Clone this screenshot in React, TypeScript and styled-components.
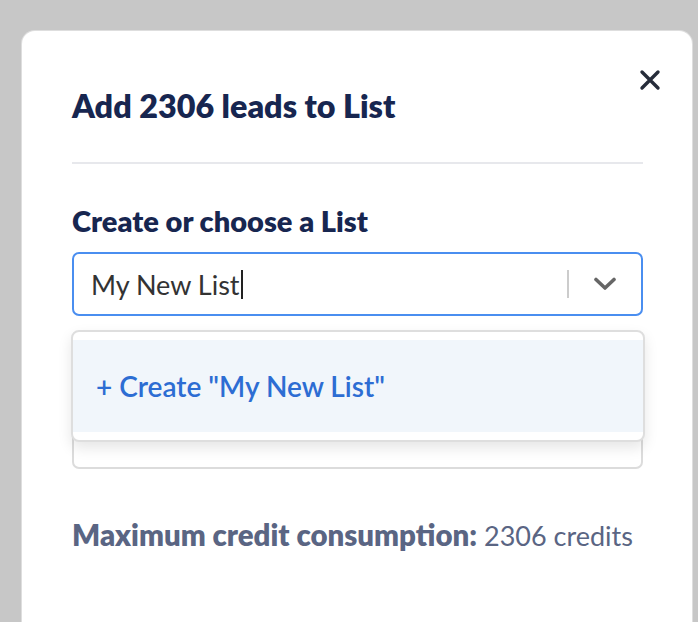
import React from "react";
import styled, { createGlobalStyle } from "styled-components";

const Global = createGlobalStyle`
  html, body { margin: 0; padding: 0; }
  body {
    background: #c7c7c7;
    font-family: "Lato", "Open Sans", sans-serif;
    overflow: hidden;
  }
`;

const Page = styled.div`
  height: 622px;
  padding: 31px 6px 0 22px;
  box-sizing: border-box;
  overflow: hidden;
`;

const Modal = styled.div`
  position: relative;
  background: #ffffff;
  border-radius: 13px;
  box-shadow: 0 0 0 1px #dedede;
  min-height: 640px;
  padding: 57px 49px 0 50px;
  box-sizing: border-box;
`;

const CloseButton = styled.button`
  position: absolute;
  top: 38px;
  right: 31px;
  width: 22px;
  height: 22px;
  padding: 0;
  border: none;
  background: none;
  display: flex;
  align-items: center;
  justify-content: center;
  cursor: pointer;
`;

const Title = styled.h2`
  margin: 0;
  font-size: 32.3px;
  line-height: 36px;
  font-weight: 800;
  color: #172650;
`;

const Divider = styled.hr`
  margin: 38px 0 0;
  border: none;
  height: 2px;
  background: #e7e8ec;
`;

const Label = styled.div`
  margin-top: 42px;
  font-size: 29px;
  line-height: 30px;
  font-weight: 800;
  color: #172650;
`;

const SelectWrap = styled.div`
  position: relative;
  margin-top: 16px;
`;

const Control = styled.div<{ $focused?: boolean }>`
  height: 64px;
  box-sizing: border-box;
  border: 2px solid ${(p) => (p.$focused ? "#4a8ef0" : "#dcdcdc")};
  border-radius: 7px;
  display: flex;
  align-items: center;
  padding-left: 17px;
  background: #fff;
`;

const ValueText = styled.div`
  flex: 1;
  display: flex;
  align-items: center;
  font-size: 27px;
  color: #333333;
`;

const Caret = styled.span`
  display: inline-block;
  width: 2px;
  height: 29px;
  background: #222;
  margin-left: 1px;
`;

const Indicators = styled.div`
  display: flex;
  align-items: center;
  height: 100%;
`;

const Separator = styled.span`
  width: 2px;
  height: 28px;
  background: #cccccc;
`;

const ChevronBox = styled.div`
  width: 72px;
  display: flex;
  align-items: center;
  justify-content: center;
`;

const Menu = styled.div`
  position: absolute;
  top: 78px;
  left: -1px;
  right: -2px;
  background: #fff;
  border: 2px solid #dedede;
  border-radius: 8px;
  box-shadow: 0 6px 14px rgba(0, 0, 0, 0.1);
  padding: 8px 0;
  z-index: 2;
`;

const Option = styled.div`
  height: 92px;
  background: #f1f6fb;
  display: flex;
  align-items: center;
  padding-left: 23px;
  font-size: 28px;
  font-weight: 600;
  color: #2d6dd3;
`;

const SecondControl = styled(Control)`
  margin-top: 89px;
`;

const Credits = styled.p`
  margin: 50px 0 0;
  font-size: 27px;
  line-height: 32px;
  color: #5a6583;
`;

const Strong = styled.strong`
  font-weight: 800;
  font-size: 29.4px;
`;

export default function App() {
  return (
    <>
      <Global />
      <Page>
        <Modal>
          <CloseButton aria-label="Close">
            <svg width="22" height="22" viewBox="0 0 22 22">
              <path
                d="M3 3 L19 19 M19 3 L3 19"
                stroke="#262c3a"
                strokeWidth="3.4"
                strokeLinecap="round"
              />
            </svg>
          </CloseButton>
          <Title>Add 2306 leads to List</Title>
          <Divider />
          <Label>Create or choose a List</Label>
          <SelectWrap>
            <Control $focused>
              <ValueText>
                My New List
                <Caret />
              </ValueText>
              <Indicators>
                <Separator />
                <ChevronBox>
                  <svg width="24" height="14" viewBox="0 0 24 14">
                    <path
                      d="M3 2.5 L12 11 L21 2.5"
                      fill="none"
                      stroke="#666666"
                      strokeWidth="3.6"
                      strokeLinecap="round"
                      strokeLinejoin="round"
                    />
                  </svg>
                </ChevronBox>
              </Indicators>
            </Control>
            <Menu>
              <Option>+ Create "My New List"</Option>
            </Menu>
            <SecondControl />
          </SelectWrap>
          <Credits>
            <Strong>Maximum credit consumption:</Strong> 2306 credits
          </Credits>
        </Modal>
      </Page>
    </>
  );
}
